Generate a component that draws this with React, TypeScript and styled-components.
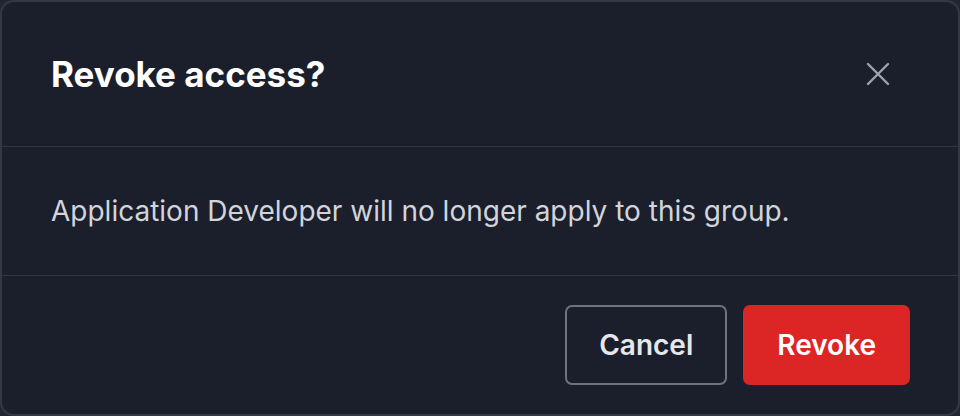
import styled, { createGlobalStyle } from 'styled-components';

const GlobalStyle = createGlobalStyle`
  html, body {
    margin: 0;
    padding: 0;
    background: #22262f;
  }
  body {
    font-family: Inter, "Noto Sans", "Liberation Sans", sans-serif;
  }
`;

const Dialog = styled.div`
  box-sizing: border-box;
  width: 960px;
  height: 416px;
  display: flex;
  flex-direction: column;
  background: #1b1f2c;
  border: 2px solid #333846;
  border-radius: 14px;
  overflow: hidden;
`;

const Header = styled.div`
  display: flex;
  align-items: center;
  justify-content: space-between;
  height: 144px;
  padding: 0 68px 0 49px;
  border-bottom: 1px solid #2f3441;
`;

const Title = styled.h2`
  margin: 0;
  font-size: 35px;
  font-weight: 650;
  color: #ffffff;
`;

const CloseBtn = styled.button`
  display: flex;
  align-items: center;
  justify-content: center;
  width: 24px;
  height: 24px;
  padding: 0;
  background: none;
  border: none;
  color: #9ca3af;
  cursor: pointer;
`;

const Body = styled.div`
  display: flex;
  align-items: center;
  height: 128px;
  padding: 0 49px;
  border-bottom: 1px solid #2f3441;
`;

const Message = styled.p`
  margin: 0;
  font-size: 28px;
  color: #d1d5db;
`;

const Footer = styled.div`
  flex: 1;
  display: flex;
  align-items: center;
  justify-content: flex-end;
  gap: 16px;
  padding: 0 48px 0 0;
`;

const Button = styled.button<{ $danger?: boolean }>`
  box-sizing: border-box;
  height: 80px;
  padding: 0 32px;
  border-radius: 7px;
  font-family: inherit;
  font-size: 28px;
  font-weight: 600;
  cursor: pointer;
  color: ${(p) => (p.$danger ? '#ffffff' : '#e5e7eb')};
  background: ${(p) => (p.$danger ? '#dc2626' : 'transparent')};
  border: 2px solid ${(p) => (p.$danger ? '#dc2626' : '#6b7280')};
`;

const App = () => {
  return (
    <>
      <GlobalStyle />
      <Dialog>
        <Header>
          <Title>Revoke access?</Title>
          <CloseBtn aria-label="Close">
            <svg width="24" height="24" viewBox="0 0 24 24" fill="none" stroke="currentColor" strokeWidth="2.4" strokeLinecap="round">
              <path d="M2 2L22 22M22 2L2 22" />
            </svg>
          </CloseBtn>
        </Header>
        <Body>
          <Message>Application Developer will no longer apply to this group.</Message>
        </Body>
        <Footer>
          <Button>Cancel</Button>
          <Button $danger>Revoke</Button>
        </Footer>
      </Dialog>
    </>
  );
};

export default App;
